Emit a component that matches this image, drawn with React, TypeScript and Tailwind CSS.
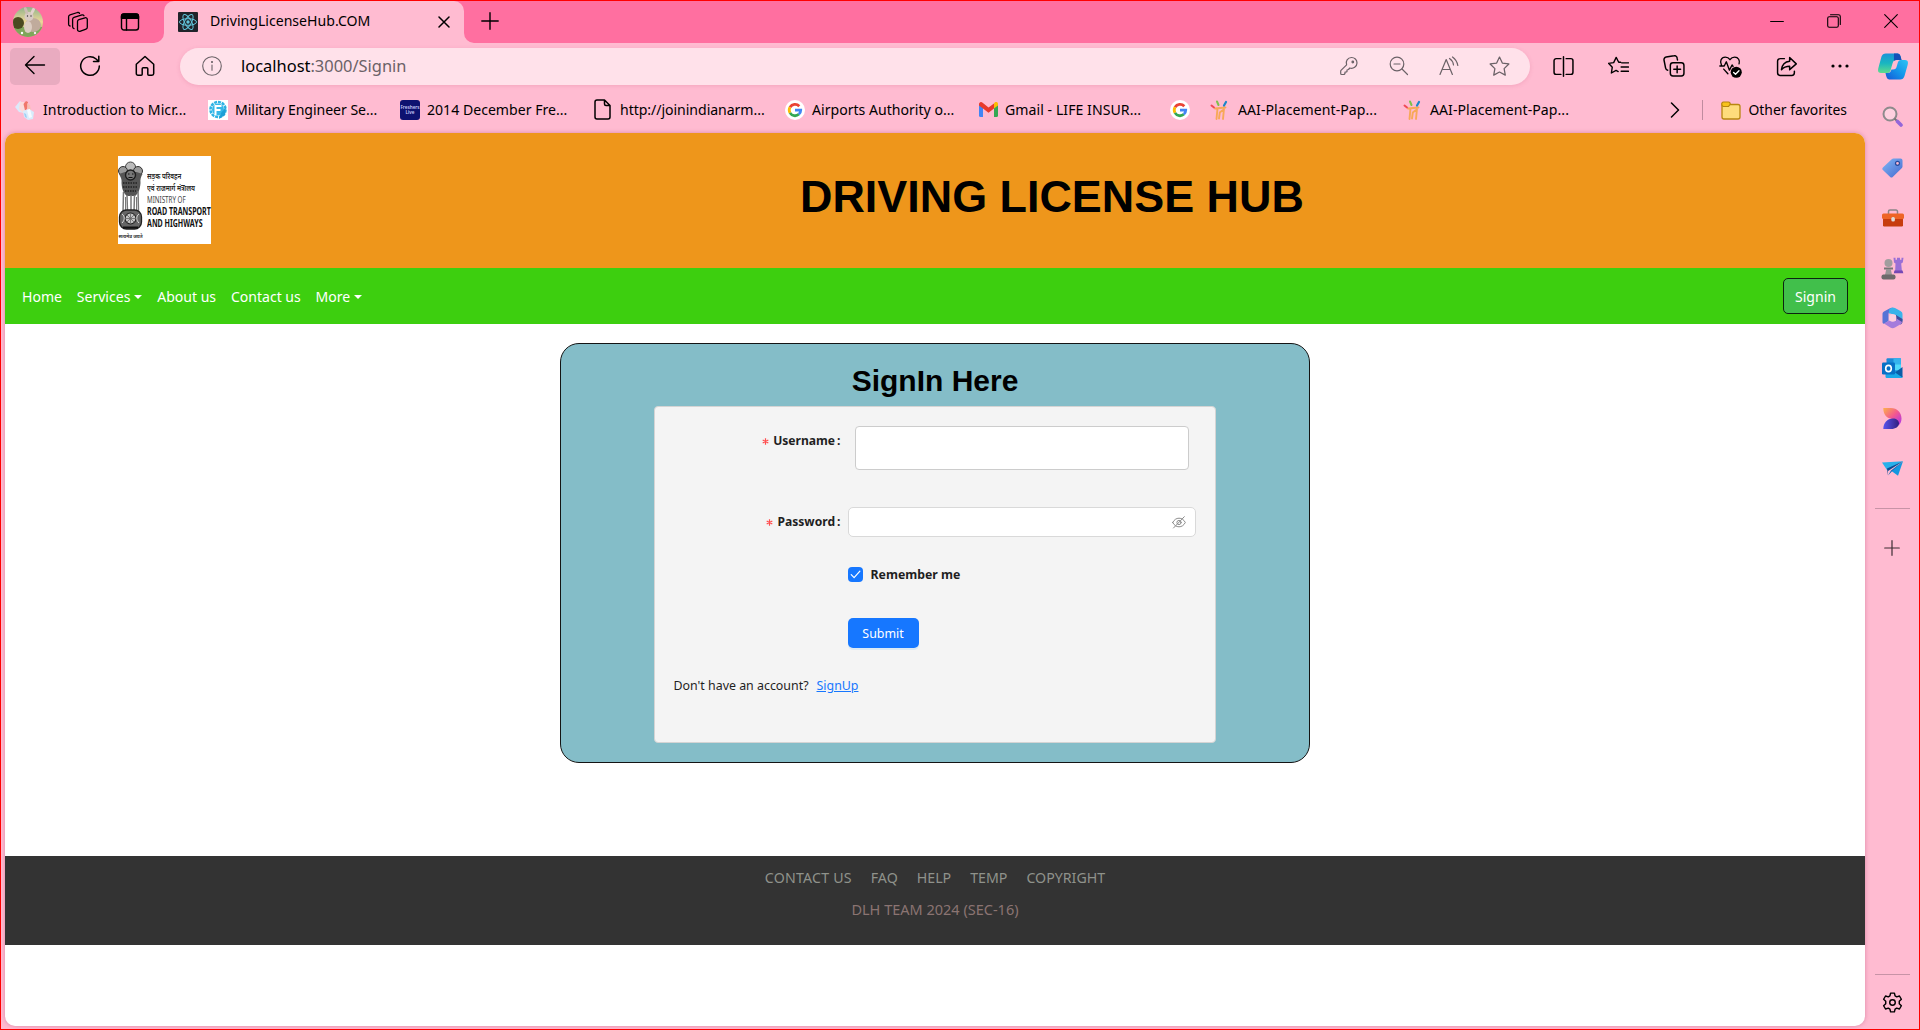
import type { ReactNode } from "react";

type IconProps = { size?: number; w?: number; h?: number; sw?: number; vb?: string; className?: string; children: ReactNode };

function Icon({ size = 20, w, h, sw = 1.3, vb = "0 0 20 20", className = "", children }: IconProps) {
  return (
    <svg
      width={w ?? size}
      height={h ?? size}
      viewBox={vb}
      fill="none"
      stroke="currentColor"
      strokeWidth={sw}
      strokeLinecap="round"
      strokeLinejoin="round"
      className={`block shrink-0 ${className}`}
    >
      {children}
    </svg>
  );
}

function Avatar() {
  return (
    <svg width="30" height="30" viewBox="0 0 30 30" className="ml-3 block shrink-0">
      <defs>
        <clipPath id="av"><circle cx="15" cy="15" r="15" /></clipPath>
        <linearGradient id="avsky" x1="0" x2="0" y1="0" y2="1">
          <stop offset="0" stopColor="#8fb28a" />
          <stop offset=".5" stopColor="#efd89a" />
          <stop offset=".75" stopColor="#b9b878" />
        </linearGradient>
      </defs>
      <g clipPath="url(#av)">
        <rect width="30" height="30" fill="url(#avsky)" />
        <rect y="20" width="30" height="10" fill="#7fa65a" />
        <circle cx="5" cy="16" r="6" fill="#4b4a20" />
        <ellipse cx="20" cy="18" rx="8" ry="7" fill="#c0ab9c" />
        <ellipse cx="15" cy="20" rx="4" ry="6" fill="#dccdc2" />
        <circle cx="16" cy="9.500" r="4.500" fill="#d8cbc4" />
        <ellipse cx="13" cy="3.500" rx="1.500" ry="4" fill="#cdbdb6" transform="rotate(-20 13 3.500)" />
        <ellipse cx="20" cy="3.500" rx="1.500" ry="4" fill="#e2d3cd" transform="rotate(25 20 3.500)" />
        <circle cx="14.500" cy="9" r=".7" fill="#333" />
        <circle cx="18" cy="9" r=".7" fill="#333" />
        <circle cx="9" cy="26" r="1.200" fill="#fff" />
        <circle cx="22" cy="26" r="1.200" fill="#f5e9f2" />
      </g>
    </svg>
  );
}

function ReactLogo() {
  return (
    <svg width="20" height="20" viewBox="0 0 20 20" className="block shrink-0">
      <rect width="20" height="20" rx="1" fill="#20232a" />
      <g fill="none" stroke="#61c5dc" strokeWidth="1">
        <ellipse cx="10" cy="10" rx="8.500" ry="3.300" />
        <ellipse cx="10" cy="10" rx="8.500" ry="3.300" transform="rotate(60 10 10)" />
        <ellipse cx="10" cy="10" rx="8.500" ry="3.300" transform="rotate(120 10 10)" />
      </g>
      <circle cx="10" cy="10" r="1.700" fill="#61c5dc" />
    </svg>
  );
}

function GoogleIcon() {
  return (
    <svg width="20" height="20" viewBox="0 0 20 20" className="block shrink-0">
      <circle cx="10" cy="10" r="10" fill="#fff" />
      <g fill="none" strokeWidth="2.800">
        <path d="M14.300 6.200A5.800 5.800 0 0 0 5 7.200" stroke="#ea4335" />
        <path d="M5 7.200a5.800 5.800 0 0 0 0 5.700" stroke="#fbbc05" />
        <path d="M5 12.900a5.800 5.800 0 0 0 8.800 1.400" stroke="#34a853" />
        <path d="M13.800 14.300a5.600 5.600 0 0 0 1.900-4.100H10" stroke="#4285f4" />
      </g>
    </svg>
  );
}

function AaiIcon() {
  return (
    <svg width="19" height="20" viewBox="0 0 19 20" className="block shrink-0">
      <path d="M5 8.500 15.500 7.500M7.500 8.500l-1 10.500M9 18.500l.8-6 3.200-2.500M14 8.500l-1 10.500" fill="none" stroke="#f7a858" strokeWidth="1.900" strokeLinecap="round" />
      <path d="M1.500 5.500 4 7.500" stroke="#ef4a55" strokeWidth="2" strokeLinecap="round" />
      <path d="m7 1.500 1.500 3.500" stroke="#7ec04b" strokeWidth="2" strokeLinecap="round" />
      <path d="m16 2-2 3.500" stroke="#1c86c8" strokeWidth="2.200" strokeLinecap="round" />
    </svg>
  );
}

function TabStrip() {
  return (
    <div className="flex h-[42px] shrink-0 items-center bg-[#ff6fa0]">
      <Avatar />
      <Icon size={22} vb="0 0 22 22" sw={1.300} className="ml-6">
        <path d="M10.500 10.500a2 2 0 0 1 1.400-1.900L18 6.800a1.800 1.800 0 0 1 2.300 1.600v7.800a2 2 0 0 1-1.300 1.900l-6.100 2.200a1.800 1.800 0 0 1-2.400-1.700z" />
        <path d="M7 17.600a1.800 1.800 0 0 1-1.400-1.800V8.200A2 2 0 0 1 7 6.300l8-2.400a1.800 1.800 0 0 1 2 .9" />
        <path d="M3 15a1.800 1.800 0 0 1-1.400-1.800V5.800A2 2 0 0 1 3 3.900l7.500-2.400a1.800 1.800 0 0 1 2 .9" />
      </Icon>
      <Icon w={20} h={20} sw={1.400} className="ml-[31px]">
        <rect x="1.500" y="2" width="17" height="16" rx="2.500" />
        <path d="M1.500 6.200V4.500A2.500 2.500 0 0 1 4 2h12a2.500 2.500 0 0 1 2.500 2.500v1.700z" fill="currentColor" />
        <path d="M6.500 6.500V18" />
      </Icon>
      <div className="relative ml-6 flex h-full w-[300px] items-center rounded-t-[10px] bg-[#ffbbd1] pl-[14px]">
        <svg width="10" height="10" viewBox="0 0 10 10" className="absolute bottom-0 -left-[10px]">
          <path d="M10 0v10H0A10 10 0 0 0 10 0" fill="#ffbbd1" />
        </svg>
        <svg width="10" height="10" viewBox="0 0 10 10" className="absolute -right-[10px] bottom-0">
          <path d="M0 0v10h10A10 10 0 0 1 0 0" fill="#ffbbd1" />
        </svg>
        <ReactLogo />
        <span className="ml-3 pb-[2px] text-[14.1px]">DrivingLicenseHub.COM</span>
        <Icon size={12} vb="0 0 12 12" sw={1.500} className="mr-[14px] ml-auto">
          <path d="m1 1 10 10M11 1 1 11" />
        </Icon>
      </div>
      <Icon size={18} vb="0 0 18 18" sw={1.400} className="mb-[2px] ml-[17px]">
        <path d="M9 .8v16.400M.8 9h16.400" />
      </Icon>
      <div className="mr-[21px] mb-[2px] ml-auto flex items-center gap-[43px]">
        <Icon size={14} vb="0 0 14 14" sw={1}><path d="M.6 7.500h12.800" /></Icon>
        <Icon size={14} vb="0 0 14 14" sw={1.100}>
          <rect x=".7" y="2.700" width="10.600" height="10.600" rx="1.500" />
          <path d="M3.500.7h8a1.800 1.800 0 0 1 1.800 1.800v8" />
        </Icon>
        <Icon size={14} vb="0 0 14 14" sw={1.100}><path d="m.7.7 12.600 12.600M13.300.7.7 13.300" /></Icon>
      </div>
    </div>
  );
}

function Toolbar() {
  return (
    <div className="flex h-[46px] shrink-0 items-center pl-[9px]">
      <div className="flex h-[37px] w-[50px] items-center justify-center rounded-[5px] bg-[#e9abc0]">
        <Icon size={22} vb="0 0 22 22" sw={1.400} className="mb-[2px]"><path d="M20.500 11H1.500M10 2.500 1.500 11l8.500 8.500" /></Icon>
      </div>
      <Icon size={22} vb="0 0 22 22" sw={1.500} className="ml-[19px]">
        <path d="M20.300 11a9.300 9.300 0 1 1-3.200-7l2.400 2.300M19.800 1.300v5.200h-5.300" />
      </Icon>
      <Icon size={22} vb="0 0 22 22" sw={1.500} className="ml-[33px]">
        <path d="M2.300 9.200 11 1.500l8.700 7.700v9.300a1.700 1.700 0 0 1-1.700 1.700h-3.200a1 1 0 0 1-1-1v-5.400a1 1 0 0 0-1-1H9.200a1 1 0 0 0-1 1v5.400a1 1 0 0 1-1 1H4a1.700 1.700 0 0 1-1.700-1.700z" />
      </Icon>
      <div className="ml-6 flex h-[37px] w-[1350px] items-center rounded-full bg-[#ffe1ea] text-[#6b6267] shadow-[0_1px_4px_rgba(190,70,110,0.18)]">
        <Icon size={20} sw={1.100} className="ml-[22px]">
          <circle cx="10" cy="10" r="9.300" />
          <path d="M10 9v5.300" />
          <circle cx="10" cy="6" r=".5" fill="currentColor" />
        </Icon>
        <span className="ml-[19px] pt-px text-[16.45px]"><span className="text-black">localhost</span>:3000/Signin</span>
        <div className="mr-[20px] ml-auto flex items-center gap-[30px]">
          <Icon size={20} sw={1.200}>
            <path d="M12.500 1.500a5.300 5.300 0 0 0-4.900 7.300L2 14.400a1 1 0 0 0-.3.700v2.400a1 1 0 0 0 1 1h2.400l.9-1v-1.500h1.500l.5-.5v-1.500l1.500-.5 1.300-1.500A5.500 5.500 0 0 0 18 6.900a5.400 5.400 0 0 0-5.500-5.400z" />
            <circle cx="13.800" cy="6" r=".8" fill="currentColor" />
          </Icon>
          <Icon size={20} sw={1.200}>
            <circle cx="8" cy="8" r="6.800" /><path d="m13 13 5.500 5.500M5 8h6" />
          </Icon>
          <Icon size={20} sw={1.200}>
            <path d="m1 18.500 6.200-15 6.200 15M3 13.500h8.300" />
            <path d="M10.500 2.500a9 9 0 0 1 4 6.500M13.500 1a13 13 0 0 1 5.300 8.500" />
          </Icon>
          <Icon size={21} sw={1.200}>
            <path d="m10 1 2.700 5.700 6.200.9-4.500 4.400 1.100 6.200L10 15.300l-5.500 2.900L5.600 12 1.100 7.600l6.200-.9z" />
          </Icon>
        </div>
      </div>
      <div className="mr-[16px] ml-auto flex items-center gap-[34px]">
        <Icon size={21} sw={1.400}>
          <path d="M7.500 2.500H3A2 2 0 0 0 1 4.500v11a2 2 0 0 0 2 2h4.500M12.500 2.500H17a2 2 0 0 1 2 2v11a2 2 0 0 1-2 2h-4.500M10 .8v18.400" />
        </Icon>
        <Icon size={21} sw={1.300}>
          <path d="M12 6 10.200 6 7.800 1.300 5.400 6.300.5 7l3.600 3.700-.9 5.500 4.500-2.500 2 1.100M13 6.500h6.500M12.500 10.500h7M12.500 14.500h7" />
        </Icon>
        <Icon size={22} vb="0 0 21 21" sw={1.400}>
          <rect x="7" y="7.500" width="13" height="12.500" rx="2.500" />
          <path d="M13.500 10.500v6.500M10.300 13.700h6.500M4.500 14.500A2.500 2.500 0 0 1 2.500 12.500L1 5a2.500 2.500 0 0 1 2-3l7.500-1.300A2.500 2.500 0 0 1 13.500 3l.3 1.700" />
        </Icon>
        <Icon size={23} vb="0 0 22 22" sw={1.300}>
          <path d="M2.300 9.500C.5 6.500 2 2 6 2c2 0 3.500 1 4.500 2.500C11.500 3 13 2 15 2c3.500 0 5.300 3.300 4.200 6.500M.8 10.500H5l2-4 3 8 2.500-5 1 1.500M4.500 13.500l4 4.500" />
          <circle cx="16.500" cy="16.500" r="5.300" fill="currentColor" stroke="none" />
          <path d="m14 16.700 1.800 1.700 3.300-3.400" stroke="#fff" />
        </Icon>
        <Icon size={21} sw={1.400}>
          <path d="M8 2.500H4a2.500 2.500 0 0 0-2.500 2.500v11A2.500 2.500 0 0 0 4 18.500h11a2.500 2.500 0 0 0 2.500-2.500v-1.500" />
          <path d="M13 1.500 19.300 7.500 13 13v-3.300c-4 0-5.800 1-7.800 3.300.5-4 3-7.500 7.800-8z" />
        </Icon>
        <svg width="18" height="6" viewBox="0 0 18 6" className="block shrink-0">
          <circle cx="2" cy="3" r="1.600" /><circle cx="9" cy="3" r="1.600" /><circle cx="16" cy="3" r="1.600" />
        </svg>
      </div>
    </div>
  );
}

function Bookmark({ icon, label, className }: { icon: ReactNode; label?: string; className: string }) {
  return (
    <div className={`flex shrink-0 items-center ${className}`}>
      {icon}
      {label && <span className="whitespace-nowrap">{label}</span>}
    </div>
  );
}

function BookmarksBar() {
  return (
    <div className="flex h-11 shrink-0 items-center pb-[2px] pl-[14px] text-[14.1px]">
      <Bookmark
        className="w-[193px] gap-[8px] tracking-[0.07px]"
        label="Introduction to Micr..."
        icon={
          <svg width="20" height="20" viewBox="0 0 20 20" className="block shrink-0">
            <path d="M0 7 5 1l4 3v9l-5-1z" fill="#dceafb" />
            <path d="M5 2h4l2 9-3 2-4-4z" fill="#fbdcdc" />
            <path d="m8.500 4 2.500-3 2 1-1 7-2 1.500z" fill="#f0776a" />
            <path d="M12 3l3 2 1 7-3-1z" fill="#f8bfb2" />
            <path d="m8 11 6-2 5 3-1 7-5 1-4-3z" fill="#d8ecfc" />
            <path d="m12 10 3-1 2 8-3 1z" fill="#f6fbff" />
            <path d="m9 13 2 1 1 4-2-1z" fill="#9fd0f4" />
          </svg>
        }
      />
      <Bookmark
        className="w-[192px] gap-[7px] tracking-[-0.05px]"
        label="Military Engineer Se..."
        icon={
          <svg width="20" height="20" viewBox="0 0 20 20" className="block shrink-0">
            <rect width="20" height="20" fill="#fff" />
            <circle cx="10" cy="9.500" r="7.500" fill="none" stroke="#2db3e4" strokeWidth="2.600" strokeDasharray="3 .9" />
            <circle cx="10" cy="9.500" r="6" fill="#35b7e8" />
            <path d="M7.500 15V6h6M7.500 10h5" stroke="#fff" strokeWidth="2" fill="none" />
            <path d="m13 13 5-6-1 8-6 4z" fill="#1d9fd6" />
          </svg>
        }
      />
      <Bookmark
        className="w-[194px] gap-[7px]"
        label="2014 December Fre..."
        icon={
          <div className="flex h-5 w-5 shrink-0 flex-col items-center justify-center rounded-[3px] bg-[#0d1270] text-[4.6px] leading-[5px] font-semibold tracking-normal text-[#c9ccf8]">
            <span>Freshers</span>
            <span>Live</span>
          </div>
        }
      />
      <Bookmark
        className="w-[191px] gap-[9px] tracking-[-0.05px]"
        label="http://joinindianarm..."
        icon={
          <Icon w={17} h={21} vb="0 0 17 21" sw={1.500}>
            <path d="M3 1h7.500L16 6.500V18a2 2 0 0 1-2 2H3a2 2 0 0 1-2-2V3a2 2 0 0 1 2-2zM10.500 1v4a1.500 1.500 0 0 0 1.500 1.500h4" />
          </Icon>
        }
      />
      <Bookmark className="w-[194px] gap-[7px]" label="Airports Authority o..." icon={<GoogleIcon />} />
      <Bookmark
        className="w-[191px] gap-[7px] tracking-[0.05px]"
        label="Gmail - LIFE INSUR..."
        icon={
          <svg width="19" height="15" viewBox="0 0 19 15" className="block shrink-0">
            <path d="M0 2v11.500A1.500 1.500 0 0 0 1.500 15H4V5z" fill="#4285f4" />
            <path d="M19 2v11.500a1.500 1.500 0 0 1-1.500 1.500H15V5z" fill="#34a853" />
            <path d="M15 1.500V6.500l4-3V2a2 2 0 0 0-3.300-1.600z" fill="#fbbc04" />
            <path d="M0 2v1.500l4 3 5.500 4.200L15 6.500v-5L9.500 5.600 3.300.5A2 2 0 0 0 0 2z" fill="#e8392c" />
          </svg>
        }
      />
      <Bookmark className="w-[40px]" icon={<GoogleIcon />} />
      <Bookmark className="w-[193px] gap-[9px] tracking-[0.05px]" label="AAI-Placement-Pap..." icon={<AaiIcon />} />
      <Bookmark className="w-[180px] gap-[8px] tracking-[0.05px]" label="AAI-Placement-Pap..." icon={<AaiIcon />} />
      <Icon w={10} h={16} vb="0 0 10 16" sw={1.500} className="ml-auto"><path d="m1.500 1 7 7-7 7" /></Icon>
      <div className="ml-[22px] h-5 w-px bg-[#c08b9f]" />
      <svg width="20" height="19" viewBox="0 0 20 19" className="ml-[18px] block shrink-0">
        <path d="M1 4v12a2 2 0 0 0 2 2h14a2 2 0 0 0 2-2V5.500a2 2 0 0 0-2-2H9z" fill="#fedc7c" stroke="#b8860f" strokeWidth="1.300" />
        <path d="M.8 3.500A2 2 0 0 1 2.500 1h5a1.800 1.800 0 0 1 1.500 2.500L7.500 5.500h-5A2 2 0 0 1 .8 3.500z" fill="#f8c21c" stroke="#b8860f" strokeWidth="1.200" />
      </svg>
      <span className="mr-[18px] ml-2 text-[13.9px]">Other favorites</span>
    </div>
  );
}

function MinistryLogo() {
  return (
    <div className="flex h-[88px] w-[93px] shrink-0 bg-white">
      <div className="flex w-[25px] shrink-0 flex-col items-center pt-[5px]">
        <svg width="25" height="69" viewBox="0 0 25 69" className="block shrink-0">
          <circle cx="12.500" cy="6" r="5" fill="#bbb" stroke="#444" />
          <circle cx="5" cy="10" r="4.500" fill="#999" stroke="#333" />
          <circle cx="20" cy="10" r="4.500" fill="#999" stroke="#333" />
          <path d="M1 13c2 4 3 5 2.500 9 .5 8 3 11 5.500 13h8c3-2 5-6 5.500-13-.5-4 .5-6 2-9l-6-2H7z" fill="#555" />
          <circle cx="12.500" cy="14" r="5" fill="#777" stroke="#1d1d1d" strokeWidth="1.400" />
          <path d="M10 13h1.500M14 13h1.500M10.500 16.500h4" stroke="#111" strokeWidth="1.200" />
          <path d="M5 22h15M5 26h15M7 30h11" stroke="#222" strokeWidth="1.600" strokeDasharray="1.500 1" />
          <path d="M5.500 31 5 51M9 34l.5 17M13 34v17M16.500 34l-.5 17M20 30l.5 21" stroke="#777" strokeWidth="1.500" />
          <path d="M7.500 36v14M18.500 36v14" stroke="#555" strokeWidth=".8" />
          <rect x="1.500" y="49" width="22" height="19" rx="7" fill="#666" stroke="#222" strokeWidth="1.300" />
          <circle cx="12.500" cy="57.500" r="5.500" fill="#c4c4c4" stroke="#222" strokeWidth="1.200" />
          <path d="M12.500 52v11M7 57.500h11M8.600 53.600l7.800 7.800M16.400 53.600l-7.800 7.800" stroke="#666" strokeWidth=".8" />
          <path d="M4 53c3 2 3 6 0 9M21 53c-3 2-3 6 0 9" stroke="#ddd" fill="none" />
          <path d="M5 66.500h15" stroke="#111" strokeWidth="2" />
        </svg>
        <span className="mt-[2px] text-[4.6px] leading-[8px] font-bold whitespace-nowrap text-[#333]">सत्यमेव जयते</span>
      </div>
      <div className="ml-1 w-[64px] pt-[13px] text-[#222]">
        <div className="h-[13px] w-[60px] origin-left scale-x-[.8] text-[8px] leading-[13px] font-semibold whitespace-nowrap">सड़क परिवहन</div>
        <div className="h-[12px] w-[60px] origin-left scale-x-[.8] text-[8px] leading-[12px] font-semibold whitespace-nowrap">एवं राजमार्ग मंत्रालय</div>
        <div className="h-[12px] w-[64px] origin-left scale-x-[.68] text-[9.2px] leading-[12px] whitespace-nowrap text-[#444]">MINISTRY OF</div>
        <div className="h-[12px] w-[84px] origin-left scale-x-[.72] text-[9.8px] leading-[12px] font-bold whitespace-nowrap text-[#111]">ROAD TRANSPORT</div>
        <div className="h-[12px] w-[84px] origin-left scale-x-[.72] text-[9.8px] leading-[12px] font-bold whitespace-nowrap text-[#111]">AND HIGHWAYS</div>
      </div>
    </div>
  );
}

function Caret() {
  return <span className="ml-1 inline-block border-x-[4px] border-t-[4px] border-x-transparent border-t-white align-[3px]" />;
}

function SiteNav() {
  return (
    <nav className="flex h-14 shrink-0 items-center bg-[#3dcf0f] px-[17px] text-[14.05px] text-white">
      <div className="flex items-center gap-[14.8px] pt-[2px]">
        <a>Home</a>
        <a>Services<Caret /></a>
        <a>About us</a>
        <a>Contact us</a>
        <a>More<Caret /></a>
      </div>
      <button className="ml-auto h-9 w-[65px] rounded-[5px] border border-[#0c2410] bg-[#41bf4b] pt-px">Signin</button>
    </nav>
  );
}

function Label({ children }: { children: ReactNode }) {
  return (
    <div className="flex h-[30px] w-[167px] shrink-0 items-center justify-end text-[12.1px] font-bold text-[#1f1f1f]">
      <svg width="7" height="7" viewBox="0 0 7 7" className="mr-[4px] block">
        <path d="M3.500.3v6.400M.7 1.900l5.600 3.200M6.300 1.900.7 5.100" stroke="#ff4d4f" strokeWidth="1.200" />
      </svg>
      {children}
      <span className="ml-[2px]">:</span>
    </div>
  );
}

function SigninCard() {
  return (
    <section className="mx-auto mt-[19px] flex h-[420px] w-[750px] shrink-0 flex-col items-center rounded-[19px] border border-[#141414] bg-[#84bdc8] pt-[18px]">
      <h2 className="h-[44px] font-['Liberation_Sans'] text-[30px] leading-[38px] font-bold">SignIn Here</h2>
      <form className="mr-px flex h-[337px] w-[562px] flex-col rounded-[4px] border border-[#d4d4d4] bg-[#f4f4f4] px-[19px] pt-[19px] text-[12.4px] text-[#1f1f1f]">
        <div className="flex h-[81px] items-start">
          <Label>Username</Label>
          <input className="ml-[14px] h-11 w-[334px] rounded-[4px] border border-[#ccc] bg-white px-3 outline-none" />
        </div>
        <div className="flex h-[60px] items-start">
          <Label>Password</Label>
          <div className="ml-[7px] flex h-[30px] w-[348px] shrink-0 items-center justify-end rounded-[5px] border border-[#d9d9d9] bg-white pr-[9px] text-[#8c8c8c]">
            <Icon w={14} h={13} vb="0 0 14 13" sw={1}>
              <path d="M.7 6.500C2.200 3.600 4.400 2.200 7 2.200s4.800 1.400 6.300 4.300C11.800 9.400 9.600 10.800 7 10.800S2.200 9.400.7 6.500z" />
              <circle cx="7" cy="6.500" r="2.100" />
              <path d="M12.300.7 1.500 12" />
            </Icon>
          </div>
        </div>
        <label className="ml-[174px] flex h-[15px] items-center gap-[8px] text-[12.3px] font-bold">
          <span className="flex h-[15px] w-[15px] items-center justify-center rounded-[4px] bg-[#1677ff] text-white">
            <Icon w={11} h={9} vb="0 0 11 9" sw={1.200}><path d="m1.200 4.700 2.900 3L9.900 1.200" /></Icon>
          </span>
          <span className="pt-[2px]">Remember me</span>
        </label>
        <button type="button" className="mt-9 ml-[174px] h-[30px] w-[71px] rounded-[5px] bg-[#1677ff] pt-[2px] text-white shadow-[0_2px_0_rgba(5,145,255,0.1)]">Submit</button>
        <p className="mt-[29px]">
          Don't have an account?<a className="ml-[8px] text-[#1677ff] underline">SignUp</a>
        </p>
      </form>
    </section>
  );
}

function SitePage() {
  return (
    <main className="ml-1 flex h-[893px] shrink-0 flex-col overflow-hidden rounded-[10px] bg-white shadow-[0_0_4px_rgba(150,40,80,0.35)]">
      <header className="flex h-[135px] shrink-0 items-start bg-[#ee961b] pl-[113px]">
        <div className="pt-[23px]"><MinistryLogo /></div>
        <h1 className="mt-[37px] ml-[589px] font-['Liberation_Sans'] text-[44.9px] leading-[54px] font-bold whitespace-nowrap">DRIVING LICENSE HUB</h1>
      </header>
      <SiteNav />
      <SigninCard />
      <footer className="mt-[93px] flex h-[89px] shrink-0 flex-col items-center bg-[#333] pt-[10px] text-[14.2px] leading-[24px]">
        <div className="flex gap-[19px] text-[#8f928b]">
          <span className="tracking-[0.2px]">CONTACT US</span>
          <span>FAQ</span>
          <span>HELP</span>
          <span>TEMP</span>
          <span>COPYRIGHT</span>
        </div>
        <div className="mt-[7px] text-[14.5px] text-[#8b7472]">DLH TEAM 2024 (SEC-16)</div>
      </footer>
    </main>
  );
}

function Slot({ children }: { children: ReactNode }) {
  return <div className="flex h-[50px] shrink-0 items-center justify-center">{children}</div>;
}

function Sidebar() {
  return (
    <aside className="flex w-[54px] shrink-0 flex-col pl-px">
      <div className="flex h-[46px] shrink-0 items-center justify-center">
        <svg width="30" height="27" viewBox="0 0 30 27" className="block">
          <defs>
            <linearGradient id="cpA" x1="0" x2="0" y1="0" y2="1">
              <stop offset="0" stopColor="#1a93d8" /><stop offset=".5" stopColor="#19b6c0" /><stop offset="1" stopColor="#5fdc8c" />
            </linearGradient>
            <linearGradient id="cpB" x1="0" x2="1" y1="1" y2="0">
              <stop offset="0" stopColor="#1557d6" /><stop offset=".5" stopColor="#1496ea" /><stop offset="1" stopColor="#2cc4f4" />
            </linearGradient>
          </defs>
          <path d="M8 .5h11c3 0 3.500 2 4.500 6.500h-5c-2.500 0-3.300 1-4 3.500l-2 7c-.5 1.500-1.500 2.500-3 2.500H3c-3 0-3.500-2-2.500-5.500l3-11C4.300 1.500 5.500.5 8 .5z" fill="url(#cpA)" />
          <path d="M16 .5h3c3 0 3.500 2 4.500 6.500h-5c-1.200 0-2 .3-2.600.9z" fill="#1450b8" />
          <path d="M22 26.500H12c-3 0-3.500-2-4.500-6.500h2c2.500 0 3.300-1 4-3.500h1.500c2.500 0 3-.8 3.700-3l1-3.500c.6-2 1.500-3 3.300-3h4c3 0 3.500 2 2.500 5.500l-3 10.500c-.8 2.500-2 3.500-4.500 3.500z" fill="url(#cpB)" />
        </svg>
      </div>
      <div className="flex flex-col pt-[4px]">
        <Slot>
          <svg width="21" height="21" viewBox="0 0 21 21" className="mb-[3px] block">
            <circle cx="8" cy="8" r="6.500" fill="#ffd0df" stroke="#8e8a8c" strokeWidth="2" />
            <path d="m12.500 12.500 2.500 2.500" stroke="#777" strokeWidth="1.800" />
            <path d="m15.500 15.500 3.500 3.500" stroke="#9466d8" strokeWidth="3.600" strokeLinecap="round" />
          </svg>
        </Slot>
        <Slot>
          <svg width="21" height="20" viewBox="0 0 21 20" className="block">
            <defs><linearGradient id="tg" x1="0" x2="1" y1="0" y2="1"><stop offset="0" stopColor="#82b8f5" /><stop offset="1" stopColor="#4468cf" /></linearGradient></defs>
            <path d="M11.500.5h7a2 2 0 0 1 2 2v6a2 2 0 0 1-.6 1.500l-9.200 9a1.800 1.800 0 0 1-2.500 0L.9 12a1.800 1.800 0 0 1 0-2.500L10 1.100a2 2 0 0 1 1.500-.6z" fill="url(#tg)" />
            <circle cx="15.500" cy="5.300" r="2" fill="#ffbbd1" stroke="#274a9b" strokeWidth="1.200" />
          </svg>
        </Slot>
        <Slot>
          <svg width="22" height="18" viewBox="0 0 22 18" className="block">
            <path d="M6.500 5V2.500A1.500 1.500 0 0 1 8 1h6a1.500 1.500 0 0 1 1.500 1.500V5" fill="none" stroke="#8c8486" strokeWidth="1.500" />
            <rect x="1" y="9" width="20" height="8.500" rx="1.300" fill="#c73c0e" />
            <rect y="4.500" width="22" height="5.500" rx="1.500" fill="#ee6426" />
            <rect x="9.300" y="8" width="3.600" height="4.500" rx="1.500" fill="#e0dcd8" />
          </svg>
        </Slot>
        <Slot>
          <svg width="23" height="23" viewBox="0 0 23 23" className="block">
            <path d="M12.500.8h2v2h1.500v-2h3v2h1.500v-2h2l-.7 4.700-1.600 1 .6 6.500 1.200 3h-9l1.200-3 .3-6.500-1.500-1z" fill="#9a6fd6" />
            <path d="M13.500 13.500h8l.8 2.700h-9.500z" fill="#7547b4" />
            <circle cx="7.500" cy="6" r="4" fill="#a19d9e" />
            <path d="M3 10.500h9v2H3z" fill="#777" />
            <path d="M5.300 12h4.500l1.200 6H4z" fill="#9a9697" />
            <rect x=".5" y="17.500" width="14" height="5" rx="2" fill="#6d6a6b" />
          </svg>
        </Slot>
        <Slot>
          <svg width="21" height="22" viewBox="0 0 21 22" className="block">
            <path d="M7.500 1.500 2 4.500C1 5 .5 6 .5 7v8c0 1.500.8 2 2 1.500L6.500 14V7.500c0-1.500.5-2.500 1.500-3.500L11 1C10 .3 8.500 1 7.500 1.500z" fill="#5673d6" />
            <path d="M9 1c1.500-.8 2.500-.7 4 .1l5.500 3c1.300.8 2 1.700 2 3.400v6.500L14 9.500V8L8 6.500 7 6.500V3.500C7 2.500 8 1.500 9 1z" fill="#39b3ea" />
            <path d="m14 8 6.500 4v2.500c0 1.500-.7 2.300-2 3L14 15z" fill="#3f4d9d" />
            <path d="m2 16.500 5-2.700 7 .2.500-2.500 5.500 3.500c0 .8-.7 1.800-1.500 2.300l-5.500 3.200c-1.700 1-3 1-4.700 0z" fill="#a57cdc" />
            <circle cx="10.700" cy="11" r="3.700" fill="#ffcfdf" />
          </svg>
        </Slot>
        <Slot>
          <svg width="21" height="20" viewBox="0 0 21 20" className="block">
            <rect x="4.500" y=".3" width="14.500" height="14" rx="1" fill="#1b8ad8" />
            <rect x="11.500" y=".3" width="7.500" height="6" fill="#34b3ee" />
            <rect x="11.500" y="6.300" width="7.500" height="6" fill="#50d9fb" />
            <path d="M3.500 8.500 20.500 18v.7a1.200 1.200 0 0 1-1.200 1.300H4.700a1.200 1.200 0 0 1-1.200-1.200z" fill="#1aa8e8" />
            <path d="M20.500 9v10.500L13 14.500z" fill="#0a5ca8" />
            <rect y="4.500" width="13" height="12" rx="1.300" fill="#0870c6" />
            <ellipse cx="6.500" cy="10.500" rx="2.800" ry="3.100" fill="none" stroke="#fff" strokeWidth="1.600" />
          </svg>
        </Slot>
        <Slot>
          <svg width="19" height="21" viewBox="0 0 19 21" className="block">
            <defs>
              <linearGradient id="dsA" x1="0" x2="1" y1="0" y2="1"><stop offset="0" stopColor="#fcb24a" /><stop offset=".5" stopColor="#f4588f" /><stop offset="1" stopColor="#a932ef" /></linearGradient>
              <linearGradient id="dsB" x1="0" x2="1" y1="0" y2="0"><stop offset="0" stopColor="#5a54ee" /><stop offset="1" stopColor="#30207f" /></linearGradient>
            </defs>
            <path d="M.3 0H8c6 0 10.500 4.500 10.500 10.500 0 3-1 5-2.500 6.500L8 10.500C3 10 .3 6 .3 0z" fill="url(#dsA)" />
            <path d="M.3 21c0-6 4-10.500 9.500-10.500 3.500 0 6.200 2 6.200 5S12.500 21 8 21z" fill="url(#dsB)" />
          </svg>
        </Slot>
        <Slot>
          <svg width="21" height="15" viewBox="0 0 21 15" className="block">
            <path d="M0 1.500 21 .2 5 9z" fill="#27b0ea" />
            <path d="M5 7.500 21 .2 6 10v4.500z" fill="#0a4c92" />
            <path d="M21 .2 16 14.800 9.500 10z" fill="#1398e0" />
            <path d="M6 14.500 9 9.500 21 .2l-11 10z" fill="#0d6cb8" />
          </svg>
        </Slot>
      </div>
      <div className="mx-auto mt-[15px] h-px w-[35px] shrink-0 bg-[#c793a6]" />
      <div className="mt-[31px] flex shrink-0 justify-center pr-px text-[#3d2d33]">
        <Icon size={16} vb="0 0 16 16" sw={1.200}><path d="M8 .7v14.600M.7 8h14.600" /></Icon>
      </div>
      <div className="mx-auto mt-auto h-px w-[35px] shrink-0 bg-[#c793a6]" />
      <div className="mt-[17px] mb-[16px] flex shrink-0 justify-center">
        <Icon size={21} vb="0 0 22 22" sw={1.500}>
          <path d="M9 1.200h4l.7 2.900 1.700 1 2.900-.9 2 3.400-2.200 2.100v2.600l2.200 2.100-2 3.400-2.900-.9-1.700 1-.7 2.900H9l-.7-2.900-1.700-1-2.900.9-2-3.400 2.200-2.100V9.700L1.700 7.600l2-3.400 2.900.9 1.700-1z" />
          <circle cx="11" cy="11" r="2.900" />
        </Icon>
      </div>
    </aside>
  );
}

export default function App() {
  return (
    <div className="flex h-[1030px] w-[1920px] flex-col overflow-hidden border border-[#ff0000] bg-[#ffbbd1] font-['Noto_Sans',sans-serif] text-black">
      <TabStrip />
      <div className="flex min-h-0 flex-1">
        <div className="flex w-[1864px] shrink-0 flex-col">
          <Toolbar />
          <BookmarksBar />
          <SitePage />
        </div>
        <Sidebar />
      </div>
    </div>
  );
}
